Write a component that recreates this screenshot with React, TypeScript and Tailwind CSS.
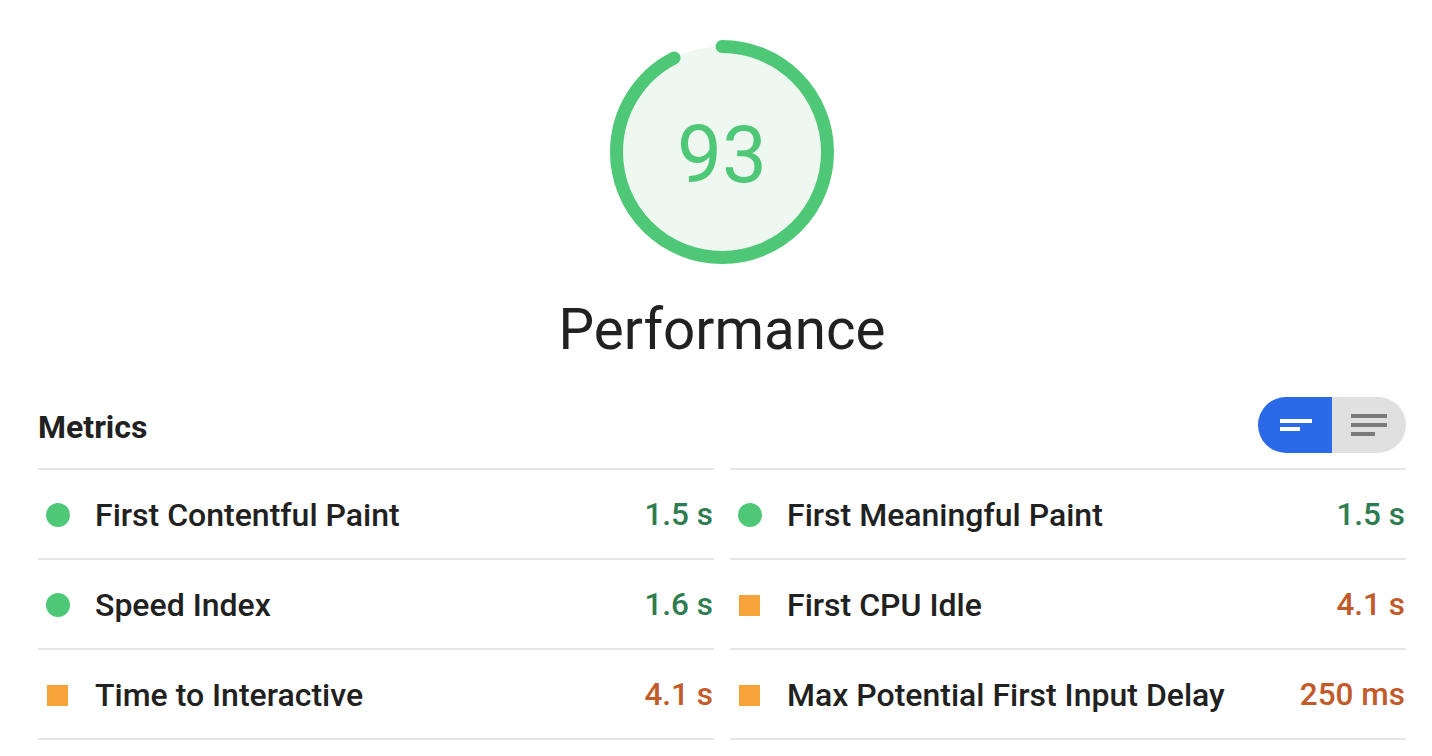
import React from "react";

type Metric = { label: string; value: string; status: "pass" | "average" };

const left: Metric[] = [
  { label: "First Contentful Paint", value: "1.5 s", status: "pass" },
  { label: "Speed Index", value: "1.6 s", status: "pass" },
  { label: "Time to Interactive", value: "4.1 s", status: "average" },
];
const right: Metric[] = [
  { label: "First Meaningful Paint", value: "1.5 s", status: "pass" },
  { label: "First CPU Idle", value: "4.1 s", status: "average" },
  { label: "Max Potential First Input Delay", value: "250 ms", status: "average" },
];

function Gauge() {
  const r = 105.5;
  const c = 2 * Math.PI * r;
  const score = 0.93;
  return (
    <svg width="224" height="224" viewBox="0 0 224 224">
      <circle cx="112" cy="112" r={r} fill="#eef8f1" />
      <circle
        cx="112"
        cy="112"
        r={r}
        fill="none"
        stroke="#4ec877"
        strokeWidth="13"
        strokeLinecap="round"
        strokeDasharray={`${c * score - 4} ${c}`}
        strokeDashoffset={0}
        transform="rotate(-90 112 112)"
      />
    </svg>
  );
}

function Row({ m }: { m: Metric }) {
  return (
    <div className="flex h-[90px] items-center border-t-2 border-[#e6e6e6] pt-[3px]">
      <div className="flex w-[57px] items-center pl-2">
        {m.status === "pass" ? (
          <div className="h-6 w-6 rounded-full bg-[#4ec877]" />
        ) : (
          <div className="ml-[1px] h-[21px] w-[21px] bg-[#f6a43a]" />
        )}
      </div>
      <div className="flex-1 text-[32px] font-medium text-[#212121]">{m.label}</div>
      <div
        className={
          "pr-[1px] text-[31.5px] font-medium " +
          (m.status === "pass" ? "text-[#2e7d50]" : "text-[#c35a2a]")
        }
      >
        {m.value}
      </div>
    </div>
  );
}

export default function App() {
  return (
    <div
      className="h-[756px] w-[1432px] overflow-hidden bg-white pl-[38px] pr-[26px]"
      style={{ fontFamily: "Roboto, 'Liberation Sans', sans-serif" }}
    >
      <div className="flex flex-col items-center pt-[40px]">
        <div className="relative h-[224px] w-[224px]">
          <Gauge />
          <div className="absolute inset-0 flex items-center justify-center pt-[6px] text-[80px] leading-none text-[#4ec877]">
            93
          </div>
        </div>
        <div className="mt-[38px] text-[56.5px] leading-none text-[#212121]">Performance</div>
      </div>
      <div className="mt-[38px] flex h-[71px] items-start justify-between">
        <div className="pt-[14px] text-[32px] font-bold leading-none text-[#212121]">Metrics</div>
        <div className="flex h-[56px] w-[148px] overflow-hidden rounded-full">
          <div className="flex w-[74px] items-center justify-center bg-[#2a6ae9]">
            <svg width="34" height="18" viewBox="0 0 34 18">
              <rect x="2" y="3" width="32" height="4" fill="#fff" />
              <rect x="2" y="11" width="20" height="4" fill="#fff" />
            </svg>
          </div>
          <div className="flex flex-1 items-center justify-center bg-[#e0e0e0]">
            <svg width="38" height="26" viewBox="0 0 38 26">
              <rect x="1" y="2" width="36" height="4" fill="#7a7a7a" />
              <rect x="1" y="11" width="36" height="4" fill="#7a7a7a" />
              <rect x="1" y="20" width="24" height="4" fill="#7a7a7a" />
            </svg>
          </div>
        </div>
      </div>
      <div className="grid grid-cols-2 gap-x-4">
        <div className="border-b-2 border-[#e6e6e6]">
          {left.map((m) => (
            <Row key={m.label} m={m} />
          ))}
        </div>
        <div className="border-b-2 border-[#e6e6e6]">
          {right.map((m) => (
            <Row key={m.label} m={m} />
          ))}
        </div>
      </div>
    </div>
  );
}
